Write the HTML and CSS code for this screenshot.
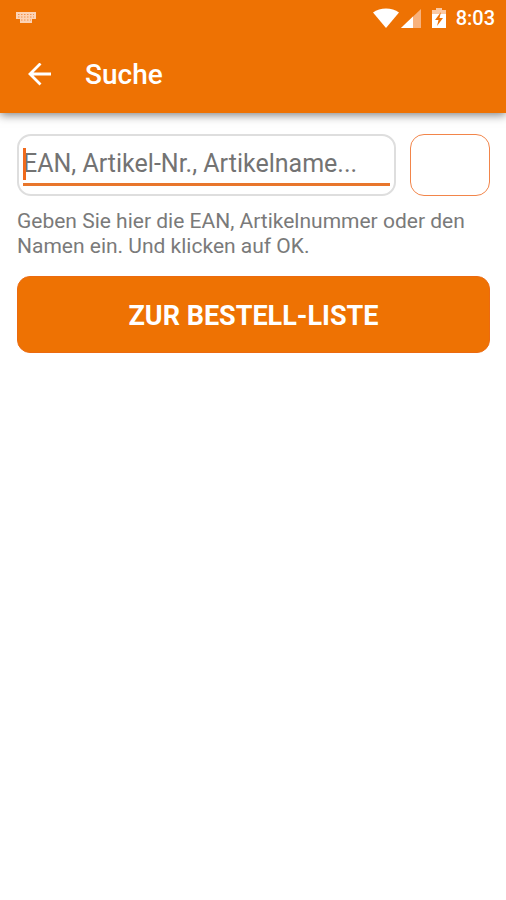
FILE: index.html
```html
<!DOCTYPE html>
<html lang="de">
<head>
<meta charset="utf-8">
<meta name="viewport" content="width=device-width, initial-scale=1">
<title>Suche</title>
<link rel="stylesheet" href="styles.css">
</head>
<body>
<header class="app-header">
  <div class="status-bar">
    <svg class="keyboard-icon" width="20" height="12" viewBox="0 0 20 12" aria-hidden="true">
      <path d="M0 0h20v7h-4v4H4V7H0z" fill="#fcd3b5"/>
      <path d="M2 2.5h16M2 5h16M5 8h10" stroke="#f2924a" stroke-width="1" stroke-dasharray="1.5 1.5"/>
    </svg>
    <div class="status-icons">
      <svg class="wifi-icon" width="26" height="20" viewBox="0 0 26 20" aria-hidden="true">
        <path d="M13 20L0 4.500C7 -1 19 -1 26 4.500z" fill="#fff"/>
      </svg>
      <svg class="signal-icon" width="20" height="19" viewBox="0 0 20 19" aria-hidden="true">
        <path d="M20 0v19H0z" fill="#f8b27c"/>
        <path d="M12 7.600V19H0z" fill="#fff"/>
      </svg>
      <svg class="battery-icon" width="14" height="20" viewBox="0 0 14 20" aria-hidden="true">
        <path d="M4 0h6v2h4v4H0V2h4z" fill="#fbc9a3"/>
        <path d="M0 6h14v14H0z" fill="#fff"/>
        <path d="M9 4L3 12h3.500L5 18l6-8H7.500z" fill="#ee7203"/>
      </svg>
      <span class="clock">8:03</span>
    </div>
  </div>
  <div class="toolbar">
    <button class="back" type="button" aria-label="Zurück">
      <svg width="24" height="24" viewBox="0 0 24 24" aria-hidden="true">
        <path d="M23 11H2M12.500 0.500L2 11l10.500 10.500" fill="none" stroke="#fff" stroke-width="2.800"/>
      </svg>
    </button>
    <h1 class="title">Suche</h1>
  </div>
</header>
<main class="content">
  <form class="search">
    <div class="field">
      <input class="field-input" id="search" type="text" placeholder="EAN, Artikel-Nr., Artikelname..." aria-describedby="hint" aria-label="Suche">
      <span class="caret"></span>
    </div>
    <button class="submit" type="submit" aria-label="OK"></button>
  </form>
  <p class="hint" id="hint">Geben Sie hier die EAN, Artikelnummer oder den Namen ein. Und klicken auf OK.</p>
  <button class="list-button" type="button">ZUR BESTELL-LISTE</button>
</main>
</body>
</html>
```
FILE: styles.css
```css
* {
  box-sizing: border-box;
}

body {
  margin: 0;
  background: #fff;
  font-family: Roboto, "Liberation Sans", sans-serif;
}

button,
input {
  font-family: inherit;
}

.app-header {
  background: #ee7203;
  color: #fff;
  box-shadow: 0 2px 9px rgba(0, 0, 0, 0.5);
}

.status-bar {
  display: flex;
  align-items: center;
  justify-content: space-between;
  height: 36px;
  padding: 0 11px 0 16px;
}

.status-icons {
  display: flex;
  align-items: center;
}

.signal-icon {
  margin-left: 2px;
}

.battery-icon {
  margin-left: 11px;
}

.clock {
  margin-left: 10px;
  font-size: 20px;
  font-weight: 500;
  line-height: 36px;
}

.toolbar {
  display: flex;
  align-items: center;
  height: 77px;
  padding: 0 28px;
  gap: 33px;
}

.back {
  display: flex;
  padding: 0;
  border: 0;
  background: none;
}

.title {
  margin: 0;
  font-size: 28px;
  font-weight: 500;
  line-height: 32px;
}

.content {
  padding: 21px 16px 16px 17px;
}

.search {
  display: flex;
  gap: 14px;
}

.field {
  position: relative;
  flex: 1;
  min-width: 0;
  height: 62px;
  padding: 8px 4px;
  border: 2px solid #dedede;
  border-radius: 14px;
}

.field-input {
  display: block;
  width: 100%;
  height: 42px;
  padding: 0;
  border: 0;
  border-bottom: 3px solid #e8762c;
  outline: 0;
  background: none;
  color: #444;
  font-size: 25px;
}

.field-input::placeholder {
  color: #737373;
  opacity: 1;
}

.caret {
  position: absolute;
  top: 12px;
  left: 4px;
  width: 3px;
  height: 32px;
  background: #f06a1c;
}

.submit {
  width: 80px;
  border: 1px solid #f2854a;
  border-radius: 14px;
  background: #fff;
}

.hint {
  margin: 13px 0 17px;
  color: #7a7a7a;
  font-size: 21px;
  line-height: 25px;
}

.list-button {
  display: block;
  width: 100%;
  height: 77px;
  padding: 2px 0 0;
  border: 1px solid #ec6a10;
  border-radius: 13px;
  background: #ee7203;
  color: #fff;
  font-size: 27px;
  font-weight: 700;
}
```
